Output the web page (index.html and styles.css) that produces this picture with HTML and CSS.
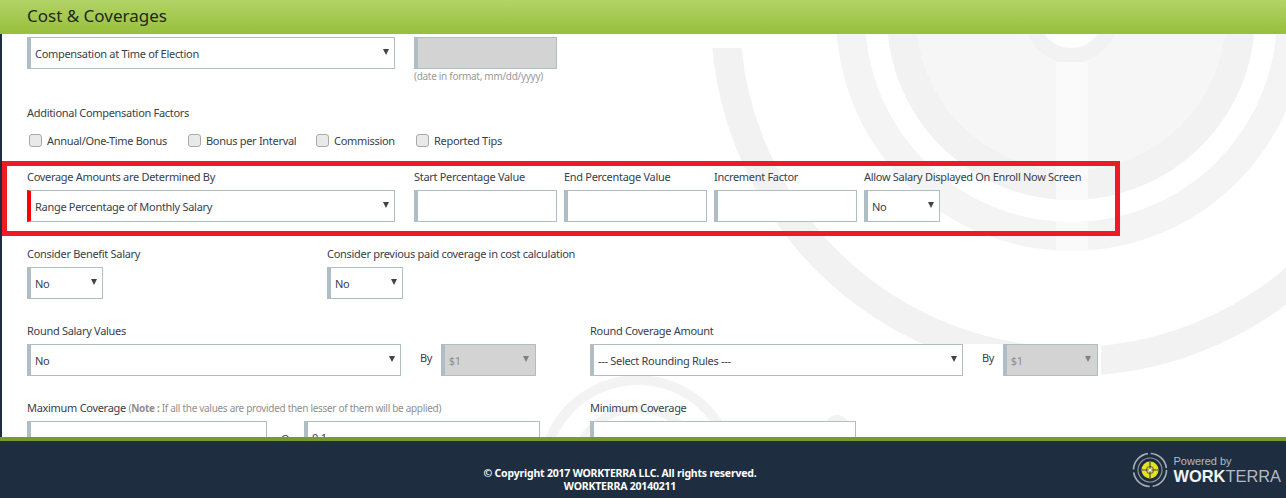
FILE: index.html
```html
<!DOCTYPE html>
<html lang="en">
<head>
<meta charset="utf-8">
<title>Cost &amp; Coverages</title>
<link rel="stylesheet" href="styles.css">
</head>
<body>
<div class="app">
  <header class="head"><h1 class="title">Cost &amp; Coverages</h1></header>
  <main class="content">
    <svg class="mark" width="1284" height="403" viewBox="2 34 1284 403" aria-hidden="true">
      <defs><clipPath id="c48"><rect x="0" y="48" width="1286" height="400"/></clipPath></defs>
      <circle cx="1071" cy="16" r="184" fill="#f6f6f6"/>
      <circle cx="1071" cy="16" r="169.5" fill="none" stroke="#f2f2f2" stroke-width="29"/>
      <circle cx="1071" cy="16" r="220.5" fill="none" stroke="#f4f4f4" stroke-width="29"/>
      <circle cx="1071" cy="16" r="345.5" fill="none" stroke="#f2f2f2" stroke-width="29" clip-path="url(#c48)"/>
      <circle cx="1071" cy="16" r="39.5" fill="none" stroke="#f2f2f2" stroke-width="15"/>
      <circle cx="1071" cy="16" r="32" fill="#fff"/>
      <rect x="1056" y="62" width="32" height="138" fill="#fafafa"/>
      <rect x="1056" y="222" width="32" height="29" fill="#fafafa"/>
      <circle cx="638" cy="475" r="95" fill="none" stroke="#f3f3f3" stroke-width="10"/>
      <circle cx="638" cy="475" r="66" fill="none" stroke="#f3f3f3" stroke-width="8"/>
      <circle cx="837" cy="427" r="12" fill="#f2f2f2"/>
    </svg>
    <div class="form">
      <div class="row r1">
        <div class="sel w368"><select><option>Compensation at Time of Election</option></select></div>
        <div class="datefield">
          <input class="inp w143 off" type="text" disabled>
          <div class="hint">(date in format, mm/dd/yyyy)</div>
        </div>
      </div>
      <div class="lbl factors">Additional Compensation Factors</div>
      <div class="checks">
        <label class="chk c1"><input type="checkbox"><span>Annual/One-Time Bonus</span></label>
        <label class="chk c2"><input type="checkbox"><span>Bonus per Interval</span></label>
        <label class="chk c3"><input type="checkbox"><span>Commission</span></label>
        <label class="chk"><input type="checkbox"><span>Reported Tips</span></label>
      </div>
      <section class="redbox">
        <div class="field w368"><div class="lbl">Coverage Amounts are Determined By</div>
          <div class="sel w368 req"><select><option>Range Percentage of Monthly Salary</option></select></div></div>
        <div class="field w143"><div class="lbl">Start Percentage Value</div><input class="inp w143" type="text"></div>
        <div class="field w143"><div class="lbl">End Percentage Value</div><input class="inp w143" type="text"></div>
        <div class="field w143"><div class="lbl">Increment Factor</div><input class="inp w143" type="text"></div>
        <div class="field"><div class="lbl">Allow Salary Displayed On Enroll Now Screen</div>
          <div class="sel w76"><select><option>No</option></select></div></div>
      </section>
      <div class="row r3">
        <div class="field col300"><div class="lbl">Consider Benefit Salary</div>
          <div class="sel w76"><select><option>No</option></select></div></div>
        <div class="field"><div class="lbl">Consider previous paid coverage in cost calculation</div>
          <div class="sel w76"><select><option>No</option></select></div></div>
      </div>
      <div class="row r4">
        <div class="field col563"><div class="lbl">Round Salary Values</div>
          <div class="inline">
            <div class="sel w374"><select><option>No</option></select></div>
            <span class="by">By</span>
            <div class="sel w95 dis"><select disabled><option>$1</option></select></div>
          </div></div>
        <div class="field"><div class="lbl">Round Coverage Amount</div>
          <div class="inline cover">
            <div class="sel w373"><select><option>--- Select Rounding Rules ---</option></select></div>
            <span class="by">By</span>
            <div class="sel w95 dis"><select disabled><option>$1</option></select></div>
          </div></div>
      </div>
      <div class="row r5">
        <div class="field col563"><div class="lbl">Maximum Coverage <span class="note">(<b>Note :</b> If all the values are provided then lesser of them will be applied)</span></div>
          <div class="inline">
            <input class="inp w240" type="text">
            <span class="or">Or</span>
            <input class="inp w236" type="text" value="0.1">
          </div></div>
        <div class="field"><div class="lbl">Minimum Coverage</div><input class="inp w266" type="text"></div>
      </div>
    </div>
  </main>
  <footer class="foot">
    <div class="copy">© Copyright 2017 WORKTERRA LLC. All rights reserved.<br>WORKTERRA 20140211</div>
    <div class="brand">
      <svg class="brandmark" width="36" height="36" viewBox="0 0 36 36" aria-hidden="true">
        <circle cx="18" cy="18" r="16.5" fill="none" stroke="#a9afb5" stroke-width="1.6" stroke-dasharray="23 3"/>
        <circle cx="18" cy="18" r="12" fill="none" stroke="#8a949c" stroke-width="1.2"/>
        <circle cx="18" cy="18" r="8.5" fill="#e6e31e"/>
        <path d="M18 10v16M10 18h16" stroke="#444" stroke-width="1.2"/>
        <circle cx="18" cy="18" r="3.6" fill="none" stroke="#555" stroke-width="1"/>
        <circle cx="18" cy="18" r="1.5" fill="#fff"/>
      </svg>
      <div class="brandtext"><div class="powered">Powered by</div><div class="wt"><b>WORK</b>TERRA</div></div>
    </div>
  </footer>
</div>
</body>
</html>
```
FILE: styles.css
```css
* { box-sizing: border-box; }
html, body { margin: 0; height: 100%; overflow: hidden; background: #fff; }
body { font-family: "Noto Sans", "DejaVu Sans", sans-serif; font-size: 11px; letter-spacing: -0.3px; color: #38414b; }
.app { height: 498px; display: flex; flex-direction: column; border-left: 2px solid #1e2d3d; }
.head { height: 34px; flex: none; background: linear-gradient(#b2d366, #98bf3c); display: flex; align-items: flex-start; margin-left: -2px; padding-left: 27px; position: relative; z-index: 2; }
.title { margin: 0; font-size: 17px; font-weight: 400; letter-spacing: 0; color: #1b2a1a; line-height: 32px; }
.content { flex: 1; min-height: 0; position: relative; overflow: hidden; }
.mark { position: absolute; left: 0; top: 0; }
.form { position: relative; padding: 3px 0 0 25px; }
.row { display: flex; }
.lbl { line-height: 14px; height: 14px; white-space: nowrap; }
.field { display: flex; flex-direction: column; gap: 6px; flex: none; }
.r1 { gap: 19px; height: 69px; }
.datefield { display: flex; flex-direction: column; }
.hint { font-size: 10px; color: #9a9a9a; line-height: 14px; }
.checks { display: flex; margin-top: 13px; height: 14px; padding-left: 2px; }
.chk { display: flex; align-items: center; white-space: nowrap; }
.chk input { appearance: none; width: 13px; height: 13px; margin: 0 5px 0 0; border: 1px solid #a9a9a9; border-radius: 3px; background: #e9e9e9; flex: none; }
.c1 { width: 159px; }
.c2 { width: 128px; }
.c3 { width: 100px; }
.redbox { display: flex; gap: 7px; margin: 14px 0 0 -25px; width: 1118px; height: 75px; border: 5px solid #ed1c24; padding: 4px 0 0 20px; }
.redbox > .field:first-child { margin-right: 12px; }
.sel { position: relative; height: 32px; flex: none; }
.sel select { appearance: none; width: 100%; height: 100%; border: 1px solid #afbdc5; border-left-width: 4px; border-radius: 0; background: #fff; padding: 0 20px 0 4px; font: inherit; letter-spacing: inherit; color: #38414b; outline: 0; }
.sel::after { content: ""; position: absolute; right: 6.5px; top: 12px; border-style: solid; border-width: 6px 3.5px 0; border-color: #444 transparent transparent; pointer-events: none; }
.req select { border-left-color: #f00; }
.dis select { background: #d3d3d3; color: #8e8e8e; opacity: 1; }
.dis::after { border-top-color: #808080; }
.inp { height: 32px; display: block; border: 1px solid #afbdc5; border-left-width: 4px; border-radius: 0; background: #fff; padding: 0 4px; font: inherit; letter-spacing: inherit; color: #38414b; outline: 0; flex: none; }
.inp.off { background: #d3d3d3; }
.w368 { width: 368px; }
.w374 { width: 374px; }
.w373 { width: 373px; }
.w143 { width: 143px; }
.w95 { width: 95px; }
.w76 { width: 76px; }
.w240 { width: 240px; }
.w236 { width: 236px; }
.w266 { width: 266px; }
.col300 { width: 300px; }
.col563 { width: 563px; }
.inline { display: flex; align-items: center; }
.cover { background: #fff; padding-right: 3px; }
.by { line-height: 14px; margin: -4px 8.5px 0 19px; }
.or { margin: 3px 0 0 14px; width: 23px; line-height: 14px; }
.r3 { margin-top: 11px; }
.r4 { margin-top: 25px; }
.r5 { margin-top: 25px; }
.note { color: #8f8f8f; font-size: 10px; }
.foot { height: 61px; flex: none; margin-left: -2px; background: #1e2e40; border-top: 4px solid #7a9a2d; position: relative; z-index: 2; display: flex; justify-content: center; padding-top: 26px; }
.copy { color: #fff; font-weight: 700; font-size: 10.5px; letter-spacing: -0.2px; line-height: 13px; text-align: center; margin-left: -46px; }
.brand { position: absolute; right: 5px; top: 11px; display: flex; align-items: center; gap: 6px; letter-spacing: 0; }
.brandmark { display: block; }
.brandtext { font-family: "Liberation Sans", sans-serif; color: #b4bac0; }
.powered { font-size: 11px; line-height: 12px; }
.wt { font-size: 16.4px; line-height: 18px; }
.wt b { color: #f1f3f5; }
```
